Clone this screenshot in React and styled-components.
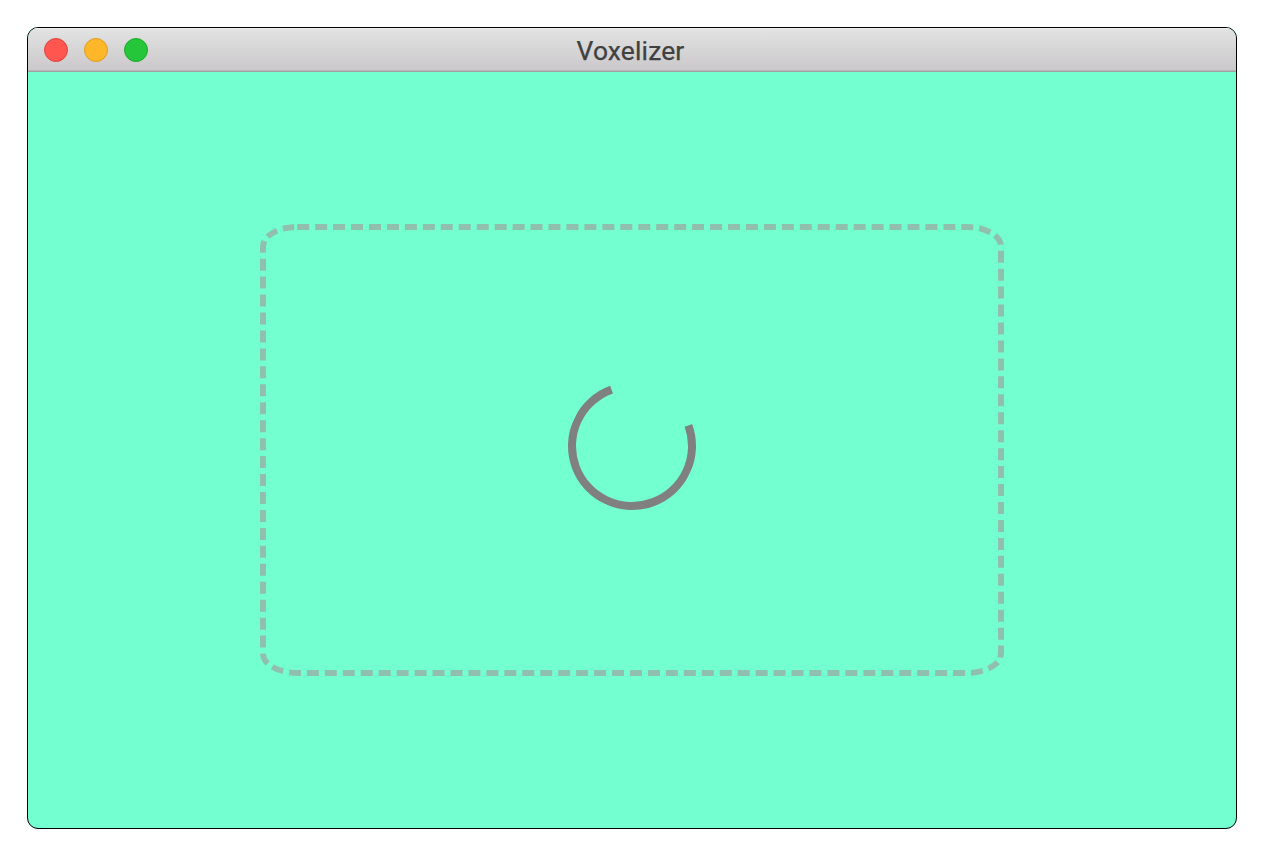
import React from "react";
import styled, { createGlobalStyle } from "styled-components";

const GlobalStyle = createGlobalStyle`
  body {
    margin: 0;
    background: #fff;
    font-family: Roboto, "Liberation Sans", sans-serif;
  }
`;

const Desktop = styled.main`
  box-sizing: border-box;
  height: 857px;
  padding: 27px 28px 28px 27px;
`;

const Window = styled.section`
  box-sizing: border-box;
  display: flex;
  flex-direction: column;
  height: 802px;
  overflow: hidden;
  border: 1px solid #000;
  border-radius: 11px;
  background: #74ffd0;
`;

const TitleBar = styled.header`
  box-sizing: border-box;
  flex: none;
  display: grid;
  grid-template-columns: 1fr auto 1fr;
  align-items: center;
  height: 44px;
  padding: 0 19px 1px 16px;
  border-bottom: 1px solid #a19fa1;
  background: linear-gradient(#e3e3e3, #cac8ca);
  box-shadow: inset 0 1px #efefef, inset 0 -1px #b9b7b9;
`;

const Controls = styled.div`
  display: flex;
  gap: 16px;
  padding-top: 2px;
`;

const Control = styled.span`
  box-sizing: border-box;
  width: 24px;
  height: 24px;
  border: 1px solid ${(p) => p.$edge};
  border-radius: 50%;
  background: ${(p) => p.$fill};
`;

const Title = styled.h1`
  margin: 0;
  padding-top: 4px;
  color: #404040;
  font-size: 26.4px;
  font-weight: 400;
  line-height: 30px;
  letter-spacing: 0.15px;
  -webkit-text-stroke: 0.25px #404040;
`;

const Content = styled.div`
  flex: 1;
  display: flex;
  align-items: center;
  justify-content: center;
`;

const DropZone = styled.div`
  position: relative;
  display: flex;
  align-items: center;
  justify-content: center;
  width: 744px;
  height: 452px;
`;

const DashedOutline = styled.svg`
  position: absolute;
  inset: 0;
  fill: none;
`;

const Dashes = styled.rect`
  stroke: #90bfae;
  stroke-width: 10px;
  stroke-dasharray: 12 5.95;
  stroke-dashoffset: -3px;
`;

const Spinner = styled.div`
  box-sizing: border-box;
  width: 128px;
  height: 128px;
  margin-bottom: 8px;
  border: 8px solid #808080;
  border-top-color: transparent;
  border-radius: 50%;
  transform: rotate(25deg);
`;

export default function App() {
  return (
    <>
      <GlobalStyle />
      <Desktop>
        <Window>
          <TitleBar>
            <Controls>
              <Control $fill="#ff5650" $edge="#e2443f" />
              <Control $fill="#ffb72a" $edge="#de9c22" />
              <Control $fill="#25c63a" $edge="#1eab2d" />
            </Controls>
            <Title>Voxelizer</Title>
          </TitleBar>
          <Content>
            <DropZone>
              <DashedOutline width="744" height="452" aria-hidden="true">
                <mask id="outline" maskUnits="userSpaceOnUse" x="0" y="0" width="744" height="452">
                  <rect x="3" y="3" width="738" height="446" rx="34.2" ry="19.6" stroke="#fff" strokeWidth="6" />
                </mask>
                <g mask="url(#outline)">
                  <Dashes x="3" y="3" width="738" height="446" rx="31.2" ry="16.6" />
                </g>
              </DashedOutline>
              <Spinner />
            </DropZone>
          </Content>
        </Window>
      </Desktop>
    </>
  );
}
